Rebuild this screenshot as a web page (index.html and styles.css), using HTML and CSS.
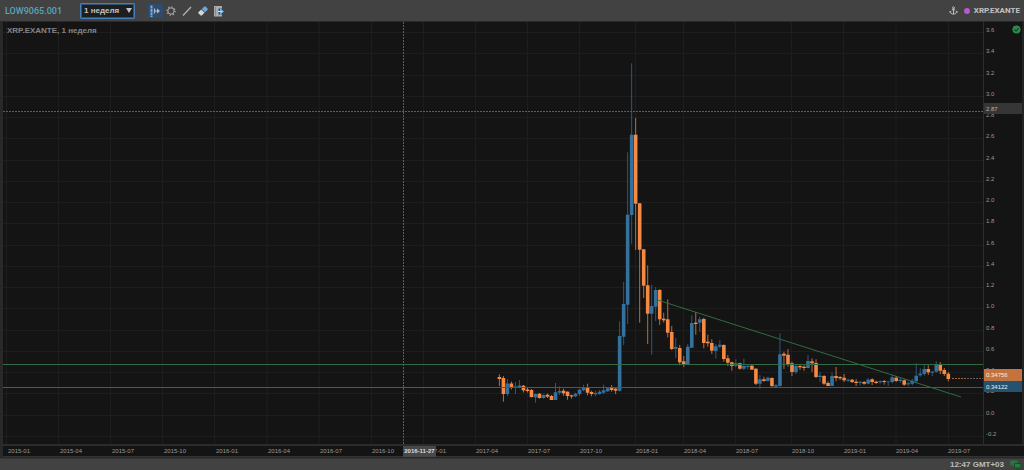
FILE: index.html
```html
<!DOCTYPE html>
<html lang="ru">
<head>
<meta charset="utf-8">
<title>XRP.EXANTE</title>
<link rel="stylesheet" href="styles.css">
</head>
<body>
<header class="toolbar">
  <a class="account" href="#">LOW9065.001</a>
  <div class="period">
    <select class="period-select" aria-label="Период"><option>1 неделя</option></select>
    <svg class="period-arrow" viewBox="0 0 6 5" aria-hidden="true"><path d="M0 0h6L3 5z"/></svg>
  </div>
  <div class="tools">
    <button class="tool tool-active" aria-label="Сдвиг графика"><svg viewBox="0 0 14 14"><path d="M3.500 1.500v11.500" stroke="#6db2ee" stroke-width="2" stroke-dasharray="3 .5"/><path d="M6.500 4.500v5M7 7h4" stroke="#aebccb" stroke-width="1.200"/><path d="M9 4.500 12 7 9 9.500z" fill="#aebccb"/></svg></button>
    <button class="tool" aria-label="Настройки"><svg viewBox="0 0 14 14"><circle cx="7" cy="7" r="3.200" fill="none" stroke="#b0b0b0"/><circle cx="7" cy="7" r="4.100" fill="none" stroke="#b0b0b0" stroke-width="1.200" stroke-dasharray="1.200 2.020"/></svg></button>
    <button class="tool" aria-label="Линия"><svg viewBox="0 0 14 14"><path d="M3 11.500 11 3" stroke="#b5b5b5" stroke-width="1.200"/></svg></button>
    <button class="tool" aria-label="Ластик"><svg viewBox="0 0 14 14"><path d="M2.300 8.300 5.300 5.400 8.600 8.700 5.800 11.500H4.600L2.300 9.300z" fill="#d2d5d8"/><path d="M5.800 4.900 8.300 2.500H9.500L11.600 4.600V5.800L9.100 8.200z" fill="#69a9e0"/></svg></button>
    <button class="tool" aria-label="Экспорт"><svg viewBox="0 0 14 14"><path d="M2 2h8v10.500H2z" fill="#a9adb0"/><path d="M3.500 3v8.500" stroke="#85898c"/><path d="M6.500 4.500h4v6h-4z" fill="#424b52"/><path d="M8 4 12 7.500 8 11z" fill="#6daee0"/><path d="M6 7.500h4" stroke="#d9e6ef"/></svg></button>
  </div>
  <div class="instrument">
    <svg class="anchor" viewBox="0 0 10 10" aria-hidden="true"><circle cx="5" cy="2" r="1.100"/><path d="M5 3v6M3.200 4.200h3.600M1.200 6c.3 2 1.700 3 3.800 3s3.500-1 3.800-3M.8 7.200 1.300 5.800l1.300.8M9.200 7.200 8.700 5.800l-1.300.8"/></svg>
    <span class="dot"></span>
    <span>XRP.EXANTE</span>
  </div>
</header>
<main class="chart">
  <section class="plot">
    <svg class="canvas" id="canvas" viewBox="3 22 980 422" preserveAspectRatio="none" role="img" aria-label="XRP.EXANTE"></svg>
    <h1 class="plot-title">XRP.EXANTE, 1 неделя</h1>
  </section>
  <aside class="prices">
    <div class="price-list" id="prices"></div>
    <span class="tag tag-cursor">2.87</span>
    <span class="tag tag-ask">0.34756</span>
    <span class="tag tag-bid">0.34122</span>
    <svg class="status" viewBox="0 0 10 10" aria-hidden="true"><circle cx="5" cy="5" r="4.500" fill="#2d8a4b"/><path d="M2.800 5 4.500 6.700 7.400 3.500" fill="none" stroke="#153b22" stroke-width="1.200"/></svg>
  </aside>
  <div class="dates">
    <div class="date-list" id="dates"></div>
    <span class="date-cursor">2016-11-27</span>
  </div>
</main>
<footer class="footer">
  <time>12:47 GMT+03</time>
  <svg class="network" viewBox="0 0 12 10" aria-hidden="true"><path d="M1 1h6v4H1zM3 6h2" fill="#247b3d" stroke="#247b3d"/><path d="M4.500 3.500h6.500v4.500H4.500zM6 9.500h4" fill="#247b3d" stroke="#174d28"/></svg>
</footer>
<script src="chart.js"></script>
</body>
</html>
```
FILE: styles.css
```css
* { box-sizing: border-box; }

body {
  margin: 0;
  min-height: 100vh;
  display: flex;
  flex-direction: column;
  background: #404040;
  color: #b8b8b8;
  font: 8px/12px "Liberation Sans", Arial, sans-serif;
}

.toolbar {
  display: flex;
  align-items: center;
  height: 21px;
  padding: 0 4px 0 5px;
  background: #424242;
}

.account {
  width: 75px;
  color: #55a6bd;
  font-family: Roboto, sans-serif;
  font-size: 9px;
  font-weight: 500;
  text-decoration: none;
}

.period { position: relative; width: 55px; }

.period-select {
  display: block;
  width: 100%;
  height: 16px;
  padding: 0 3px;
  appearance: none;
  border: 1px solid #4580bd;
  border-radius: 1px;
  outline: 1px solid #30516f;
  outline-offset: -2px;
  background: #1d1e20;
  color: #c4c4c4;
  font: bold 8px/12px "Liberation Sans", Arial, sans-serif;
}

.period-arrow {
  position: absolute;
  top: 5px;
  right: 3px;
  width: 6px;
  height: 5px;
  fill: #c4c4c4;
  pointer-events: none;
}

.tools { display: flex; gap: 1px; margin-left: 13px; }

.tool {
  width: 15px;
  height: 14px;
  padding: 0;
  border: 0;
  background: none;
}

.tool svg { display: block; width: 14px; height: 14px; }
.tool-active { background: #304b6b; }

.instrument {
  display: flex;
  align-items: center;
  gap: 4px;
  margin-left: auto;
  color: #c2c2c2;
  font: bold 8px/12px Roboto, sans-serif;
}

.anchor { width: 9px; height: 9px; margin-right: 2px; fill: none; stroke: #c8c8c8; }
.dot { width: 6px; height: 6px; border-radius: 50%; background: #b459ce; }

.chart {
  flex: 1;
  display: grid;
  grid-template: 1fr 13px / 1fr 40px;
  border: solid #292929;
  border-width: 1px 0 1px 3px;
  background: #141414;
}

.plot { position: relative; min-height: 0; border-right: 1px solid #2d2d2d; }
.canvas { position: absolute; inset: 0; width: 100%; height: 100%; }

.plot-title {
  position: absolute;
  top: 3px;
  left: 4px;
  margin: 0;
  color: #858585;
  font-size: 8px;
  line-height: 12px;
}

.prices {
  position: relative;
  border-right: 2px solid #242424;
  color: #999;
  font-size: 6px;
}

.price-list {
  height: 100%;
  padding: 2px 0 4px 2px;
  display: flex;
  flex-direction: column;
  justify-content: space-between;
}

.tag {
  position: absolute;
  left: 0;
  right: 0;
  height: 11px;
  padding-left: 2px;
  color: #eee;
  line-height: 12px;
}

.tag-cursor { top: 19.200%; background: #363636; color: #b5b5b5; }
.tag-ask { top: 82.300%; height: 12px; background: #c4733e; }
.tag-bid { top: 85.100%; background: #23536f; }

.status { position: absolute; top: 3px; right: 1px; width: 9px; height: 9px; }

.dates {
  position: relative;
  grid-column: 1 / -1;
  border-top: 2px solid #2c2c2c;
  border-bottom: 1px solid #333;
  color: #999;
  font-size: 6px;
  line-height: 11px;
}

.date-list {
  display: grid;
  grid-template-columns: repeat(11, 52fr) 56fr 48fr 52fr 56fr 52fr 52fr 52fr 76fr;
  padding-left: 5px;
  white-space: nowrap;
}

.date-cursor {
  position: absolute;
  top: 0;
  left: 39.200%;
  width: 33px;
  padding-left: 1px;
  background: #484848;
  color: #ddd;
  font-weight: bold;
}

.footer {
  display: flex;
  align-items: center;
  justify-content: flex-end;
  gap: 6px;
  height: 12px;
  padding-right: 2px;
  border-top: 1px solid #363636;
  background: #424242;
  color: #bdbdbd;
  font-weight: bold;
}

.network { width: 12px; height: 10px; }

.grid { stroke: #1e1e1e; }
.up { fill: #34729d; stroke: #34729d; }
.down { fill: #f58a45; stroke: #f58a45; }
.wick { stroke-width: 1; opacity: .75; }
.body { stroke: none; }
.level { stroke: #326b43; fill: none; }
.cursor { stroke: #5c5c5c; stroke-dasharray: 2 1; }
.last { stroke: #a4623a; stroke-dasharray: 2 1; }
```
FILE: chart.js
```js
// Weekly candles: direction, high, low, body top, body bottom.
const candles = `
d 374.3 386 377 379|d 376 401.7 378 394|u 379 396 383.5 394|d 381.5 389.5 383.5 387.5|u 382 394 386.5 388
u 380 388.5 385.5 387|d 385 392.5 385.7 390.3|d 387.5 392.5 389.5 391|d 389 397.5 390 397|u 393.3 402.7 394 397.3
d 393.3 398.7 393.7 398|u 394.3 398.7 395 398|d 393.7 398 394.7 396.7|d 395 400 396 400|u 383 400 392.3 400
u 386.3 395 391 392.7|d 388.7 395.7 390.7 393.3|d 391.3 399.7 391.7 396|d 394.7 398.7 395.3 396.5|u 392.7 397.3 393.7 396.3
u 388.7 396 389.7 394|u 384.7 391.3 387 390.3|d 383.7 395.3 387 392.7|d 390.7 396.3 392 394|u 390.7 396.3 393 394.3
u 390 394.7 391.7 394|u 384.7 394 390.3 392.7|u 387.7 392 388.3 391.3|d 385 391.7 388 390|d 387.3 394 388.7 390.7
u 321.3 391.7 336 390.7|u 282 345 304 336.7|u 152.3 324 214.7 304.7|u 63.3 244 134.7 215|d 118 250 134.7 203.7
d 203 322.7 203.3 249.7|d 249 298 249.3 285.7|d 265.3 344 285.3 313.7|u 284.7 354.7 306 313.7|u 287 321 290 306.7
d 289 325 290 319.3|d 312.7 322.7 318.7 320.3|d 299.3 337.3 319.3 332.7|d 326 350 332 349|u 338 358 347 348.7
d 345 365.3 348 362.3|d 356 367 361.3 364|u 344 365 346.7 364.7|u 315.3 348 323 347.7|d 312 334.7 322.7 324
u 316.7 332 319.3 322.7|d 317.7 348.3 319 343|d 334.7 346.7 341.7 343.3|d 339.3 354 343 350.7|u 344 358.7 346.3 351
u 340 348.7 344.7 346.7|d 344.3 361.7 345 359|d 355 366 358.3 362.7|d 361.7 370.7 362.3 366|u 359.3 367.3 363.3 365.7
d 362.7 369.7 363.3 368.7|u 358.7 370 366 368.7|u 364.7 369.3 366 367|d 364.7 370 365.7 369.7|d 368.3 385 368.7 383.7
u 375 389 379.3 383.7|d 376.7 381.7 379.3 381|u 376.7 381.7 377.7 381|d 377.3 387 378 386|u 384 388.3 385.3 386.7
u 333.3 386.7 354.3 386|d 351.7 369 353.7 355.7|d 349 366.7 354.7 365|d 361.7 376 363.3 372|u 364 374 366 372
d 364.7 370 366 367.3|d 365.3 370.7 366.7 368|u 355 368.3 361 368|d 358.3 372 361.3 363.3|d 359.3 378 363 377
u 372 382 375.7 377|d 375 385 376 383.7|d 381.3 386 383 386|u 372.7 386 376 386|d 367 381.3 376 378
d 376 380 377 378.3|d 374 382 377.7 380.3|u 378.7 382.3 379.7 380.7|d 379 383 379.7 382|d 379.3 386 381.7 383
u 381 385.3 381.7 382.7|d 381 384.7 382 383.7|u 378 384.3 379.7 383.7|d 378.3 385 379.3 382|d 380.7 384 381.7 383
u 380.3 383.7 381.3 382.3|d 380 384.7 381 382|u 380.7 386 381.7 382.3|u 374.7 383.3 377.3 382|d 376 382 377.7 381
u 377.3 382.7 379.7 381|d 379.3 385.7 380.3 384.7|u 382 386 383.3 384.3|u 378.7 385.3 380.7 383.7|u 363.3 383.3 375.7 381.3
u 368.3 376.7 373.7 375.3|u 365.3 375.7 369 374|d 365.3 375 369 372.3|u 371 376 371.7 372.7|u 361.3 372.7 364.3 371.7
d 362 374 364.7 370.7|d 368 376 370 374|d 372 381.3 373.7 379`.trim().split(/[|\n]/);

const gridX = [6.5, 58.5, 110.5, 162.5, 214.5, 267, 319, 371.5, 423.5, 475.5, 527.5, 579.5, 635.5, 683.5, 735.5, 791.5, 843.5, 896, 948.5];
const line = (cls, x1, y1, x2, y2) => `<line class="${cls}" x1="${x1}" y1="${y1}" x2="${x2}" y2="${y2}"/>`;

let art = gridX.map(x => line('grid', x, 22, x, 444)).join('');
for (let i = 0; i < 20; i++) {
  const y = 32.5 + Math.round(i * 21.25);
  art += line('grid', 3, y, 984, y);
}
candles.forEach((row, i) => {
  const [kind, ...values] = row.split(' ');
  const [high, low, top, bottom] = values.map(Number);
  const cls = kind === 'u' ? 'up' : 'down';
  const x = 499.4 + i * 4.008;
  art += line(`wick ${cls}`, x, high, x, low);
  art += `<rect class="${cls} body" x="${x - 1.8}" y="${top}" width="3.600" height="${bottom - top}"/>`;
});
art += line('level', 3, 364.5, 984, 364.5) + line('level', 3, 387.5, 984, 387.5);
art += line('level', 656, 299.5, 961, 397);
art += line('last', 952, 378.5, 966, 378.5) + line('cursor', 967, 378.5, 984, 378.5);
art += line('cursor', 3, 111.5, 984, 111.5) + line('cursor', 403.5, 22, 403.5, 444);
document.getElementById('canvas').innerHTML = art;

const prices = Array.from({ length: 20 }, (_, i) => ((18 - i) / 5).toFixed(1));
document.getElementById('prices').innerHTML = prices.map(p => `<span>${p}</span>`).join('');

const dates = gridX.map((_, i) => `${2015 + Math.floor(i / 4)}-${['01', '04', '07', '10'][i % 4]}`);
document.getElementById('dates').innerHTML = dates.map(d => `<span>${d}</span>`).join('');
```
